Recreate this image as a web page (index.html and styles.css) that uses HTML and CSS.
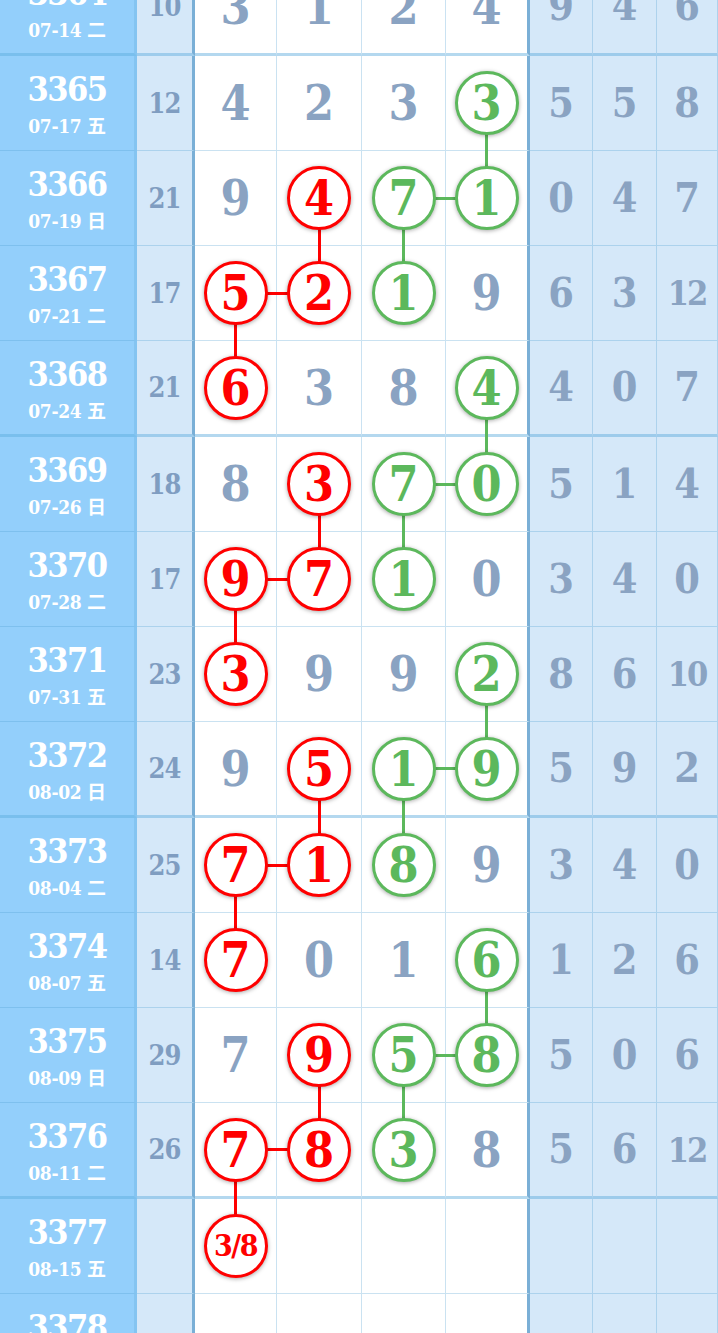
FILE: index.html
```html
<!DOCTYPE html>
<html lang="zh-CN">
<head>
    <meta charset="UTF-8">
    <meta name="viewport" content="width=device-width, initial-scale=1.0">
    <title>走势图</title>
    <link rel="stylesheet" href="styles.css">
</head>
<body>
    <div class="chart">
        <div class="row grp">
            <div class="iss"><span class="no">3364</span><span class="dt">07-14 二</span></div>
            <div class="sum">10</div>
            <div class="n">3</div><div class="n">1</div><div class="n">2</div><div class="n">4</div>
            <div class="r">9</div><div class="r">4</div><div class="r">6</div>
        </div>
        <div class="row">
            <div class="iss"><span class="no">3365</span><span class="dt">07-17 五</span></div>
            <div class="sum">12</div>
            <div class="n">4</div><div class="n">2</div><div class="n">3</div>
            <div class="n grn dn"><span class="ball">3</span></div>
            <div class="r">5</div><div class="r">5</div><div class="r">8</div>
        </div>
        <div class="row">
            <div class="iss"><span class="no">3366</span><span class="dt">07-19 日</span></div>
            <div class="sum">21</div>
            <div class="n">9</div>
            <div class="n red dn"><span class="ball">4</span></div>
            <div class="n grn dn rt"><span class="ball">7</span></div>
            <div class="n grn"><span class="ball">1</span></div>
            <div class="r">0</div><div class="r">4</div><div class="r">7</div>
        </div>
        <div class="row">
            <div class="iss"><span class="no">3367</span><span class="dt">07-21 二</span></div>
            <div class="sum">17</div>
            <div class="n red dn rt"><span class="ball">5</span></div>
            <div class="n red"><span class="ball">2</span></div>
            <div class="n grn"><span class="ball">1</span></div>
            <div class="n">9</div>
            <div class="r">6</div><div class="r">3</div><div class="r two">12</div>
        </div>
        <div class="row grp">
            <div class="iss"><span class="no">3368</span><span class="dt">07-24 五</span></div>
            <div class="sum">21</div>
            <div class="n red"><span class="ball">6</span></div>
            <div class="n">3</div><div class="n">8</div>
            <div class="n grn dn"><span class="ball">4</span></div>
            <div class="r">4</div><div class="r">0</div><div class="r">7</div>
        </div>
        <div class="row">
            <div class="iss"><span class="no">3369</span><span class="dt">07-26 日</span></div>
            <div class="sum">18</div>
            <div class="n">8</div>
            <div class="n red dn"><span class="ball">3</span></div>
            <div class="n grn dn rt"><span class="ball">7</span></div>
            <div class="n grn"><span class="ball">0</span></div>
            <div class="r">5</div><div class="r">1</div><div class="r">4</div>
        </div>
        <div class="row">
            <div class="iss"><span class="no">3370</span><span class="dt">07-28 二</span></div>
            <div class="sum">17</div>
            <div class="n red dn rt"><span class="ball">9</span></div>
            <div class="n red"><span class="ball">7</span></div>
            <div class="n grn"><span class="ball">1</span></div>
            <div class="n">0</div>
            <div class="r">3</div><div class="r">4</div><div class="r">0</div>
        </div>
        <div class="row">
            <div class="iss"><span class="no">3371</span><span class="dt">07-31 五</span></div>
            <div class="sum">23</div>
            <div class="n red"><span class="ball">3</span></div>
            <div class="n">9</div><div class="n">9</div>
            <div class="n grn dn"><span class="ball">2</span></div>
            <div class="r">8</div><div class="r">6</div><div class="r two">10</div>
        </div>
        <div class="row grp">
            <div class="iss"><span class="no">3372</span><span class="dt">08-02 日</span></div>
            <div class="sum">24</div>
            <div class="n">9</div>
            <div class="n red dn"><span class="ball">5</span></div>
            <div class="n grn dn rt"><span class="ball">1</span></div>
            <div class="n grn"><span class="ball">9</span></div>
            <div class="r">5</div><div class="r">9</div><div class="r">2</div>
        </div>
        <div class="row">
            <div class="iss"><span class="no">3373</span><span class="dt">08-04 二</span></div>
            <div class="sum">25</div>
            <div class="n red dn rt"><span class="ball">7</span></div>
            <div class="n red"><span class="ball">1</span></div>
            <div class="n grn"><span class="ball">8</span></div>
            <div class="n">9</div>
            <div class="r">3</div><div class="r">4</div><div class="r">0</div>
        </div>
        <div class="row">
            <div class="iss"><span class="no">3374</span><span class="dt">08-07 五</span></div>
            <div class="sum">14</div>
            <div class="n red"><span class="ball">7</span></div>
            <div class="n">0</div><div class="n">1</div>
            <div class="n grn dn"><span class="ball">6</span></div>
            <div class="r">1</div><div class="r">2</div><div class="r">6</div>
        </div>
        <div class="row">
            <div class="iss"><span class="no">3375</span><span class="dt">08-09 日</span></div>
            <div class="sum">29</div>
            <div class="n">7</div>
            <div class="n red dn"><span class="ball">9</span></div>
            <div class="n grn dn rt"><span class="ball">5</span></div>
            <div class="n grn"><span class="ball">8</span></div>
            <div class="r">5</div><div class="r">0</div><div class="r">6</div>
        </div>
        <div class="row grp">
            <div class="iss"><span class="no">3376</span><span class="dt">08-11 二</span></div>
            <div class="sum">26</div>
            <div class="n red dn rt"><span class="ball">7</span></div>
            <div class="n red"><span class="ball">8</span></div>
            <div class="n grn"><span class="ball">3</span></div>
            <div class="n">8</div>
            <div class="r">5</div><div class="r">6</div><div class="r two">12</div>
        </div>
        <div class="row">
            <div class="iss"><span class="no">3377</span><span class="dt">08-15 五</span></div>
            <div class="sum"></div>
            <div class="n red"><span class="ball small">3/8</span></div>
            <div class="n"></div><div class="n"></div><div class="n"></div>
            <div class="r"></div><div class="r"></div><div class="r"></div>
        </div>
        <div class="row">
            <div class="iss"><span class="no">3378</span><span class="dt">08-17 日</span></div>
            <div class="sum"></div>
            <div class="n"></div><div class="n"></div><div class="n"></div><div class="n"></div>
            <div class="r"></div><div class="r"></div><div class="r"></div>
        </div>
    </div>
</body>
</html>
```

FILE: styles.css
```css
body {
    margin: 0;
    padding: 0;
    background-color: #fff;
    font-family: "DejaVu Serif", "Noto Sans CJK SC", serif;
    font-weight: bold;
    font-stretch: condensed;
}

.chart {
    margin-top: -40px;
}

.row {
    display: grid;
    grid-template-columns: 137px 58px 82px 85px 84px 84px 63px 64px 61px;
    height: 95px;
}

.row.grp {
    height: 96px;
}

.row > div {
    box-sizing: border-box;
    display: flex;
    align-items: center;
    justify-content: center;
    border-bottom: 1px solid rgba(80, 160, 210, 0.3);
    border-right: 1px solid rgba(80, 160, 210, 0.3);
    line-height: 1;
}

.row.grp > div {
    border-bottom: 3px solid rgba(90, 170, 220, 0.45);
}

/* issue column */
.iss {
    flex-direction: column;
    gap: 11px;
    background-color: #93cffb;
    color: #fff;
    padding-top: 2px;
    border-right: 3px solid #84c4f1 !important;
}

.iss .no {
    font-size: 34px;
    letter-spacing: -1.5px;
}

.iss .dt {
    font-size: 19px;
    letter-spacing: -0.3px;
}

.sum {
    background-color: #d5e8f9;
    color: #7f9dc1;
    font-size: 27px;
    letter-spacing: -1px;
    border-right: 3px solid #7aafd6 !important;
}

.n {
    position: relative;
    color: #8aa3c2;
    font-size: 48px;
}

.n:nth-child(6) {
    border-right: 3px solid #7aafd6 !important;
}

.r {
    background-color: #d5e8f9;
    color: #8aa3c2;
    font-size: 41px;
}

.r.two {
    font-size: 34px;
    letter-spacing: -2px;
}

.red {
    color: #ff0000;
}

.grn {
    color: #5cb85c;
}

.ball {
    position: relative;
    z-index: 2;
    box-sizing: border-box;
    width: 64px;
    height: 64px;
    border: 3px solid currentColor;
    border-radius: 50%;
    background-color: #fff;
    display: flex;
    align-items: center;
    justify-content: center;
    font-size: 48px;
    box-shadow: 0 1px 4px rgba(0, 0, 0, 0.35);
}

.ball.small {
    font-size: 30px;
    letter-spacing: -1.5px;
}

/* connecting lines between balls */
.dn::after {
    content: "";
    position: absolute;
    z-index: 1;
    left: 50%;
    top: 50%;
    width: 3px;
    height: 96px;
    margin-left: -1.5px;
    background-color: currentColor;
}

.rt::before {
    content: "";
    position: absolute;
    z-index: 1;
    left: 50%;
    top: 50%;
    width: 86px;
    height: 3px;
    margin-top: -1.5px;
    background-color: currentColor;
}
```
